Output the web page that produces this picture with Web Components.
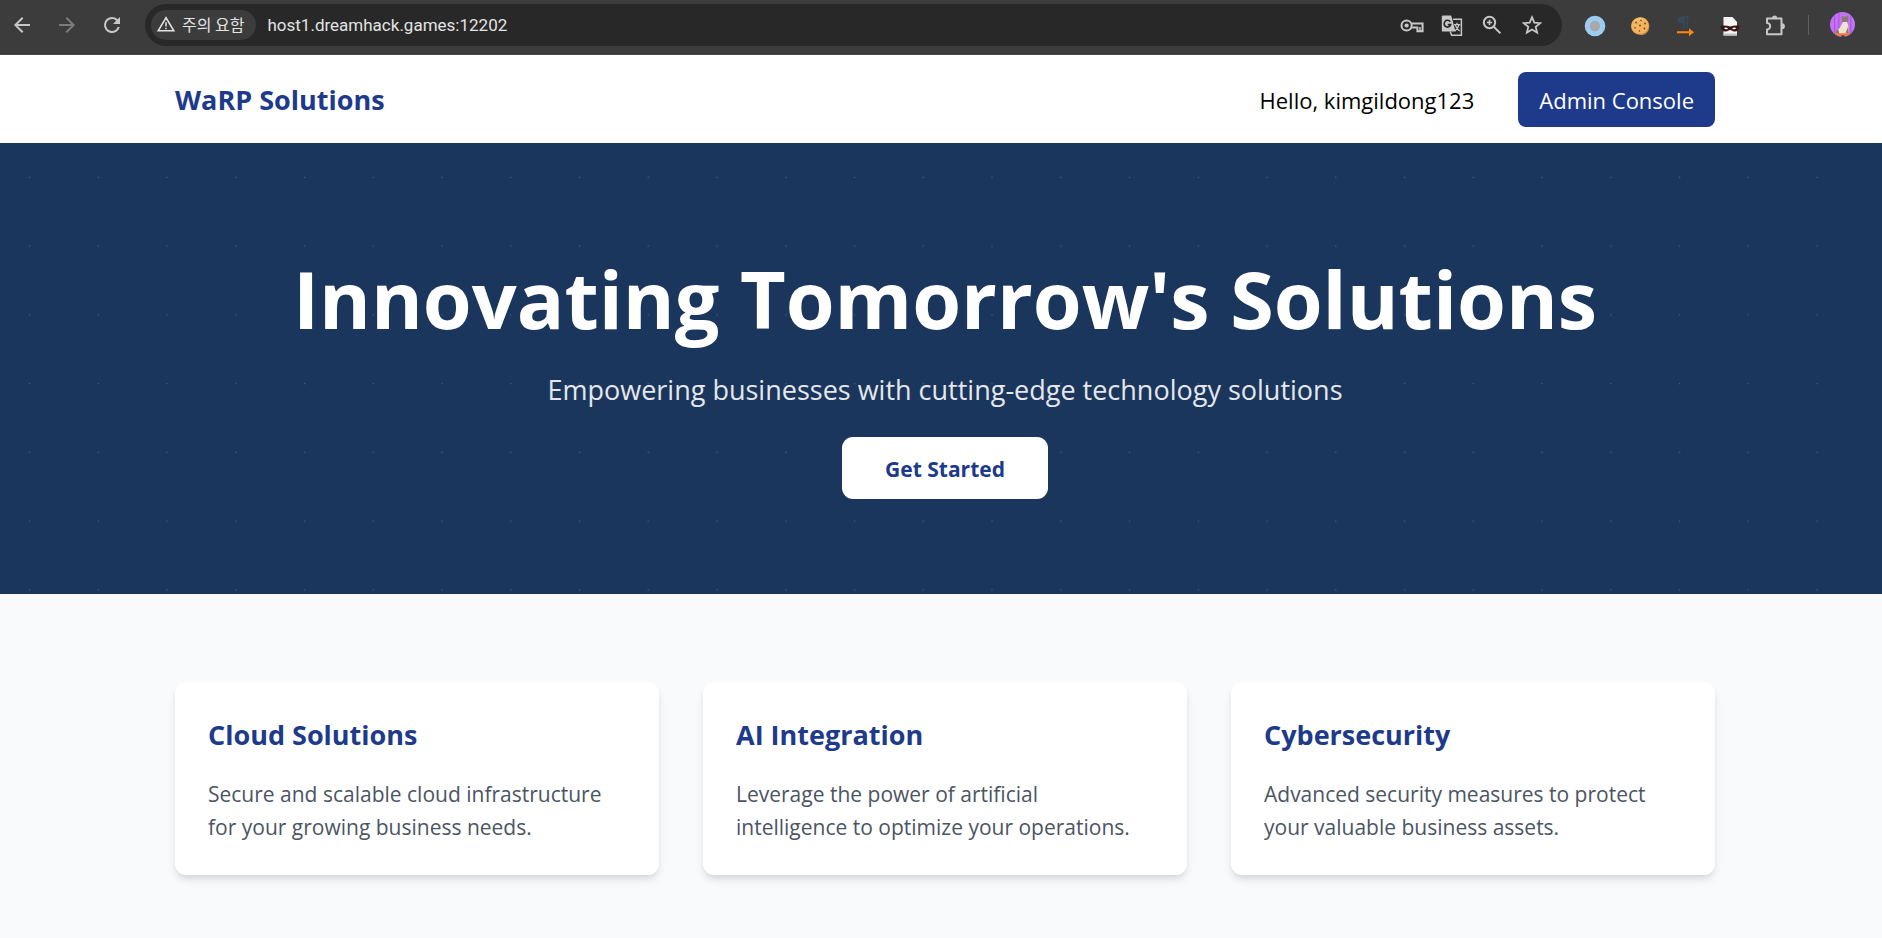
<!DOCTYPE html>
<html lang="en">
<head>
<meta charset="utf-8">
<title>WaRP Solutions</title>
<style>
  body {
    margin: 0;
    background: #f9fafb;
    font-family: "Open Sans", "Noto Sans CJK KR", sans-serif;
    font-size: 22px;
    line-height: 33px;
    --brand: #1e3a8a;
    --navy: #1a365d;
    --gutter-left: 175px;
    --gutter-right: 167px;
  }
</style>
</head>
<body>
<browser-toolbar></browser-toolbar>
<site-header brand="WaRP Solutions">
  <span>Hello, kimgildong123</span>
</site-header>
<main>
  <hero-banner>
    <span slot="title">Innovating Tomorrow's Solutions</span>
    <span slot="subtitle">Empowering businesses with cutting-edge technology solutions</span>
    <span slot="action">Get Started</span>
  </hero-banner>
  <feature-grid>
    <feature-card><span slot="title">Cloud Solutions</span>Secure and scalable cloud infrastructure for your growing business needs.</feature-card>
    <feature-card><span slot="title">AI Integration</span>Leverage the power of artificial intelligence to optimize your operations.</feature-card>
    <feature-card><span slot="title">Cybersecurity</span>Advanced security measures to protect your valuable business assets.</feature-card>
  </feature-grid>
</main>

<script>
const ICONS = {
  back: '<path fill="currentColor" d="M20 11H7.8l5.6-5.6L12 4l-8 8 8 8 1.4-1.4L7.8 13H20z"/>',
  forward: '<path fill="currentColor" d="M4 11h12.2l-5.6-5.6L12 4l8 8-8 8-1.4-1.4 5.6-5.6H4z"/>',
  reload: '<path fill="currentColor" d="M17.65 6.35A7.96 7.96 0 0 0 12 4a8 8 0 1 0 7.73 10h-2.08A6 6 0 1 1 12 6c1.66 0 3.14.69 4.22 1.78L13 11h7V4z"/>',
  warning: '<path fill="none" stroke="currentColor" stroke-width="1.8" d="M12 4.5 21.4 20.2H2.6z"/><path stroke="currentColor" stroke-width="1.8" d="M12 10v5M12 16.4v1.8"/>',
  key: '<g fill="none" stroke="currentColor" stroke-width="2"><circle cx="6.6" cy="12.5" r="5.1"/><path d="M11.3 10.4H22.6V18.2H17.4V14.6H11.3"/></g><circle cx="6.6" cy="12.5" r="2.1" fill="currentColor"/><path stroke="currentColor" stroke-width="1.5" d="M20 14v4"/>',
  translate: '<path fill="none" stroke="currentColor" stroke-width="1.5" d="M13 6.3h8.4v15.9h-9.8l-1.4-3.8"/><path fill="currentColor" d="M3 2.5h8.2L15.5 18.6H3A1.2 1.2 0 0 1 1.8 17.4V3.7A1.2 1.2 0 0 1 3 2.5z"/><path fill="none" stroke="#282828" stroke-width="1.6" d="M10.3 8.7A3.4 3.4 0 1 0 10.8 11.6H7.8"/><path fill="none" stroke="currentColor" stroke-width="1.3" d="M14 11.6h6.3M17 9.8v1.8M19 11.6c-.6 2.6-2.1 4.7-4 6.3M15.4 12.4c.8 2.3 2.1 4.1 4.2 5.6"/>',
  zoom: '<g fill="none" stroke="currentColor" stroke-width="2"><circle cx="9.5" cy="9.5" r="5.7"/><path d="m13.8 13.8 6.6 6.6"/><path d="M9.5 6.8v5.4M6.8 9.5h5.4" stroke-width="1.6"/></g>',
  star: '<path fill="none" stroke="currentColor" stroke-width="1.8" d="m12 4.2 2.3 5.4 5.9.5-4.500 3.800 1.400 5.700L12 16.500l-5.100 3.100 1.400-5.700-4.500-3.800 5.900-.5z"/>',
  ring: '<circle cx="12" cy="13" r="10.3" fill="#9ccdf0"/><circle cx="12" cy="13" r="5.2" fill="#a9a9a9"/>',
  cookie: '<path fill="#d08a40" d="M12.5 4.500c5 0 8.800 3.700 8.800 8.900S17.500 22 12.500 22 3.200 18.600 3.200 13.600 7.500 4.500 12.500 4.500z"/><path fill="#f2b45e" d="M12.300 4.300c4.600 0 8.200 3.400 8.200 8.200s-3.700 8.300-8.500 8.300-8.700-3.200-8.700-7.900 4-8.600 9-8.600z"/><path fill="#fbd08a" d="M6 9.500c2-4 6-5 9-3.500-4 .2-7 1.500-9 3.500z"/><g fill="#7a4218"><circle cx="8" cy="9.500" r=".9"/><circle cx="13" cy="7.500" r=".8"/><circle cx="17" cy="10.500" r=".9"/><circle cx="12" cy="12.500" r=".9"/><circle cx="7" cy="14.800" r=".8"/><circle cx="16.500" cy="15.500" r=".9"/><circle cx="11.500" cy="18" r=".8"/></g>',
  pilcrow: '<path fill="#344c5c" d="M8.500 3.500H16v1.200h-1.200V16h-1.300V4.700h-1.800V16h-1.300V10.200C6.500 10.200 5 8.800 5 6.900s1.500-3.400 3.500-3.400z"/><path fill="#ff860d" d="M4 18.200h12v-3l5 4-5 4v-3H4z"/>',
  mask: '<path fill="#f4f4f4" d="M5.500 4h9L19 9v13.500H5.500z"/><path fill="#bfc4c2" d="M5.500 20.500H19v2H5.500z"/><path fill="#381614" d="M2.500 13c3-.8 5.800-.6 9.700.4 3.600-1 6.300-1.200 9.300-.4-.1 3.600-1.900 5.700-5.200 5.500-1.800-.1-2.700-1.500-4.200-1.500s-2.300 1.400-4.200 1.500c-3.200.2-5.100-1.700-5.400-5.500z"/><path fill="#fff" d="M6 15.200c1.300-1 3-.9 4 .5-1.300.9-2.900.9-4-.5zM14.200 15.700c1-1.400 2.700-1.500 4-.5-1.100 1.400-2.700 1.400-4 .5z"/>',
  puzzle: '<path fill="none" stroke="currentColor" stroke-width="2" stroke-linejoin="round" d="M4 5.500h14.500v15.700H4v-4.700a3.200 3.200 0 0 0 0-6.400z"/><path fill="currentColor" d="M9 5a2.600 2.600 0 0 1 5.200 0zM19 10.300a2.900 2.900 0 0 1 0 5.800z"/>',
  avatar: '<clipPath id="disc"><circle cx="12" cy="12" r="12"/></clipPath><g clip-path="url(#disc)"><path fill="#c472f7" d="M0 0h24v24H0z"/><path stroke="#a850e0" d="M4.500 0v24M8.500 0v20M20 0v24"/><path fill="#8c7a70" d="m11.500 3.500 1.500 1 3-.3 1.500-1 .2 5-1.700 2.300h-3.500l-1.500-2z"/><path fill="#f0e5cc" d="M12.500 9.500h3.800c2 3.500 2 8 1 11.500H7.500c-1.500-2 0-4.500 2-6z"/><path fill="#8c7a70" d="M6 20.500c-1-2 .5-3.500 2-4l1 4.500zM15 20l2.500-6 .3 7z"/><path fill="#ef7f22" d="M5 20.500h14v2H5z"/><path fill="#3b2460" d="M11 22.500h3V24h-3z"/></g>'
};

function define(name, html, setup) {
  const template = document.createElement('template');
  template.innerHTML = html;
  customElements.define(name, class extends HTMLElement {
    constructor() {
      super();
      this.attachShadow({ mode: 'open' }).append(template.content.cloneNode(true));
    }
    connectedCallback() {
      if (setup) setup(this, this.shadowRoot);
    }
  });
}

define('ui-icon', `
  <style>
    :host { display: block; flex: none; width: 24px; height: 24px; }
    svg { display: block; width: 100%; height: 100%; }
  </style>
  <svg viewBox="0 0 24 24" aria-hidden="true"></svg>`,
  (host, root) => { root.querySelector('svg').innerHTML = ICONS[host.getAttribute('name')]; });

define('icon-button', `
  <style>
    :host { display: block; flex: none; }
    button { display: block; margin: 0; padding: 0; border: 0; background: none; color: inherit; }
  </style>
  <button type="button"><slot></slot></button>`,
  (host, root) => { root.querySelector('button').setAttribute('aria-label', host.getAttribute('label')); });

define('browser-toolbar', `
  <style>
    :host {
      display: flex; align-items: center; gap: 21px; box-sizing: border-box;
      height: 55px; padding: 0 27px 5px 10px;
      background: #3c3c3c; border-bottom: 1px solid #4a4a4a; color: #c7c7c7;
    }
    .omnibox {
      display: flex; flex: 1; min-width: 0; align-items: center; box-sizing: border-box;
      height: 42px; padding: 0 18px 0 6px; border-radius: 21px; background: #282828;
    }
    .chip {
      display: flex; flex: none; align-items: center; gap: 6px; box-sizing: border-box;
      height: 30px; padding: 0 12px 2px 5px; border: 0; border-radius: 15px;
      background: #3c3c3c; color: #e3e3e3; font: 16px/24px "Noto Sans CJK KR", sans-serif;
    }
    .chip ui-icon { width: 20px; height: 20px; }
    input {
      flex: 1; min-width: 0; margin: 0 12px 0 11px; padding: 0; border: 0; outline: 0;
      background: none; color: #e3e3e3; font: 17px/24px Roboto, sans-serif;
    }
    .actions { display: flex; gap: 16px; }
    .dim { color: #7c7c7c; }
    .divider { width: 1px; height: 20px; background: #5f5f5f; }
    .avatar { width: 25px; height: 25px; }
  </style>
  <icon-button label="Back"><ui-icon name="back"></ui-icon></icon-button>
  <icon-button label="Forward" class="dim"><ui-icon name="forward"></ui-icon></icon-button>
  <icon-button label="Reload"><ui-icon name="reload"></ui-icon></icon-button>
  <div class="omnibox">
    <button type="button" class="chip"><ui-icon name="warning"></ui-icon>주의 요함</button>
    <input type="text" aria-label="Address" value="host1.dreamhack.games:12202">
    <div class="actions">
      <icon-button label="Passwords"><ui-icon name="key"></ui-icon></icon-button>
      <icon-button label="Translate"><ui-icon name="translate"></ui-icon></icon-button>
      <icon-button label="Zoom"><ui-icon name="zoom"></ui-icon></icon-button>
      <icon-button label="Bookmark"><ui-icon name="star"></ui-icon></icon-button>
    </div>
  </div>
  <icon-button label="Ring extension"><ui-icon name="ring"></ui-icon></icon-button>
  <icon-button label="Cookie extension"><ui-icon name="cookie"></ui-icon></icon-button>
  <icon-button label="Paragraph extension"><ui-icon name="pilcrow"></ui-icon></icon-button>
  <icon-button label="Mask extension"><ui-icon name="mask"></ui-icon></icon-button>
  <icon-button label="Extensions"><ui-icon name="puzzle"></ui-icon></icon-button>
  <span class="divider"></span>
  <icon-button label="Profile"><ui-icon name="avatar" class="avatar"></ui-icon></icon-button>`);

define('site-header', `
  <style>
    :host { display: block; background: #fff; }
    header {
      display: flex; align-items: center; justify-content: space-between; box-sizing: border-box;
      min-height: 88px; padding: 0 var(--gutter-right) 0 var(--gutter-left);
    }
    .brand { color: var(--brand); font-size: 27px; line-height: 39px; font-weight: 700; text-decoration: none; }
    nav { display: flex; align-items: center; gap: 44px; color: #000; }
    .greeting { padding-top: 2px; }
    .admin {
      padding: 12px 21px 10px; border-radius: 8px;
      background: var(--brand); color: #fff; text-decoration: none;
    }
  </style>
  <header>
    <a class="brand" href="#"></a>
    <nav><div class="greeting"><slot></slot></div><a class="admin" href="#admin">Admin Console</a></nav>
  </header>`,
  (host, root) => { root.querySelector('.brand').textContent = host.getAttribute('brand'); });

define('hero-banner', `
  <style>
    :host { display: block; position: relative; background: var(--navy); color: #fff; text-align: center; }
    .dots { position: absolute; inset: 0; width: 100%; height: 100%; }
    section {
      position: relative; display: flex; flex-direction: column; align-items: center;
      padding: 114px var(--gutter-right) 95px var(--gutter-left);
    }
    h1 { margin: 0 0 30px; font-size: 79px; line-height: 83px; font-weight: 700; }
    p { margin: 0 0 28px; color: #e5e7eb; font-size: 27px; line-height: 39px; }
    a {
      padding: 16px 43px 13px; border-radius: 11px; background: #fff;
      color: var(--brand); font-size: 21px; font-weight: 700; text-decoration: none;
    }
  </style>
  <svg class="dots" aria-hidden="true">
    <defs>
      <pattern id="dot" width="50" height="50" patternUnits="userSpaceOnUse" patternTransform="scale(1.375)">
        <circle cx="21.5" cy="25" r="0.5" fill="#fff" fill-opacity="0.2"/>
      </pattern>
    </defs>
    <rect width="100%" height="100%" fill="url(#dot)"/>
  </svg>
  <section>
    <h1><slot name="title"></slot></h1>
    <p><slot name="subtitle"></slot></p>
    <a href="#features"><slot name="action"></slot></a>
  </section>`);

define('feature-grid', `
  <style>
    :host {
      display: grid; grid-template-columns: repeat(3, 1fr); gap: 44px;
      padding: 88px var(--gutter-right) 63px var(--gutter-left);
    }
  </style>
  <slot></slot>`);

define('feature-card', `
  <style>
    :host {
      display: block; padding: 33px 33px 31px; border-radius: 11px; background: #fff;
      box-shadow: 0 6px 8px -1px rgb(0 0 0 / 0.1), 0 3px 6px -3px rgb(0 0 0 / 0.1);
    }
    h3 { margin: 0 0 24px; color: var(--brand); font-size: 27px; line-height: 39px; font-weight: 700; }
    p { margin: 0; color: #4b5563; font-size: 21px; line-height: 33px; }
  </style>
  <h3><slot name="title"></slot></h3>
  <p><slot></slot></p>`);
</script>
</body>
</html>
